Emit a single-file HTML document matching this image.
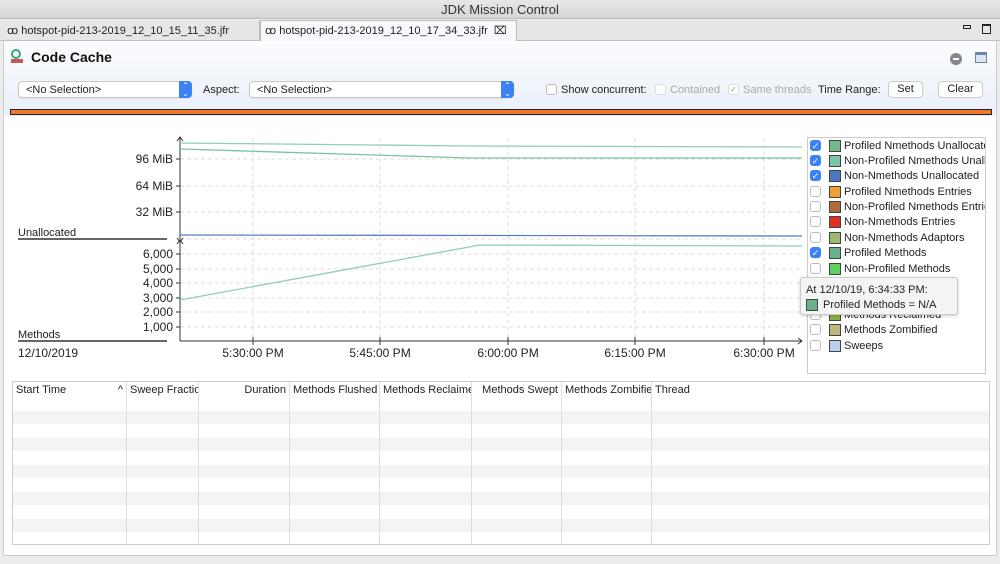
<!DOCTYPE html>
<html><head><style>
*{box-sizing:border-box;margin:0;padding:0}
body{width:1000px;height:564px;overflow:hidden;background:#ececec;font-family:"Liberation Sans",sans-serif;font-size:11px;color:#222;position:relative}
.abs{position:absolute}
.sel{position:absolute;height:17px;background:#fff;border:1px solid #c8c8c8;border-radius:4px;font-size:11px;padding:2px 7px;box-shadow:0 1px 1px rgba(0,0,0,.08)}
.sel .ar{position:absolute;right:-1px;top:-1px;width:13px;height:17px;background:#3b82f6;border-radius:0 4px 4px 0;color:#fff;font-size:8px;text-align:center;line-height:8px;padding-top:1px}
.cb{position:absolute;width:11px;height:11px;border:1px solid #bbb;border-radius:3px;background:#fff}
.cb.on{background:#3b82f6;border-color:#3b82f6;color:#fff;font-size:9px;line-height:10px;text-align:center}
.btn{position:absolute;height:17px;background:#fff;border:1px solid #ccc;border-radius:4px;text-align:center;font-size:11px;line-height:15px}
.leg{position:absolute;left:810px;width:175px;overflow:hidden;height:14px;font-size:11px;white-space:nowrap}
.sw{position:absolute;left:19px;top:0;width:12px;height:12px;border:1px solid #444}
.th{position:absolute;top:0;height:16px;line-height:16px;font-size:11px;border-right:1px solid #ddd;padding:0 3px;white-space:nowrap;overflow:hidden}
</style></head><body>
<div class="abs" style="left:0;top:0;width:1000px;height:19px;background:linear-gradient(#e8e8e8,#d6d6d6);text-align:center;font-size:13px;line-height:19px;color:#333;border-bottom:1px solid #bbb">JDK Mission Control</div>
<div class="abs" style="left:0;top:20px;width:1000px;height:21px;background:#e6e6e6;border-bottom:1px solid #c0c0c0"></div>
<div class="abs" style="left:3px;top:21px;width:257px;height:20px;border-right:1px solid #bbb;font-size:11px;line-height:20px;padding-left:4px;color:#222">ꝏ hotspot-pid-213-2019_12_10_15_11_35.jfr</div>
<div class="abs" style="left:260px;top:20px;width:257px;height:22px;background:#f6f8fc;border:1px solid #bbb;border-bottom:none;font-size:11px;line-height:20px;padding-left:4px">ꝏ hotspot-pid-213-2019_12_10_17_34_33.jfr &nbsp;⌧</div>
<div class="abs" style="left:963px;top:25px;width:8px;height:4px;border:1px solid #222"></div>
<div class="abs" style="left:982px;top:24px;width:9px;height:10px;border:1px solid #222;border-top-width:2px"></div>
<div class="abs" style="left:3px;top:41px;width:994px;height:74px;background:linear-gradient(#fbfcfe,#e9eff9);border-left:1px solid #ccc;border-right:1px solid #ccc"></div>
<div class="abs" style="left:11px;top:49px;width:10px;height:10px;border:2px solid #3a7;border-radius:50%"></div>
<div class="abs" style="left:11px;top:59px;width:12px;height:4px;background:#c55"></div>
<div class="abs" style="left:31px;top:49px;font-size:14px;font-weight:bold;color:#111">Code Cache</div>
<div class="abs" style="left:950px;top:53px;width:12px;height:12px;border-radius:50%;background:#888"><div style="margin:5px 3px;width:6px;height:2px;background:#fff"></div></div>
<div class="abs" style="left:975px;top:52px;width:12px;height:11px;border:1px solid #6a86aa;background:#dbe5f2;border-top-width:3px"></div>
<div class="sel" style="left:18px;top:81px;width:174px">&lt;No Selection&gt;<div class="ar">⌃<br>⌄</div></div>
<div class="abs" style="left:203px;top:84px">Aspect:</div>
<div class="sel" style="left:249px;top:81px;width:265px">&lt;No Selection&gt;<div class="ar">⌃<br>⌄</div></div>
<div class="cb" style="left:546px;top:84px"></div><div class="abs" style="left:561px;top:84px">Show concurrent:</div>
<div class="cb" style="left:655px;top:84px;border-color:#ddd"></div><div class="abs" style="left:670px;top:84px;color:#aaa">Contained</div>
<div class="cb" style="left:728px;top:84px;border-color:#ddd;font-size:8px;color:#999;line-height:10px;text-align:center">✓</div><div class="abs" style="left:743px;top:84px;color:#aaa">Same threads</div>
<div class="abs" style="left:818px;top:84px">Time Range:</div>
<div class="btn" style="left:888px;top:81px;width:35px">Set</div>
<div class="btn" style="left:938px;top:81px;width:45px">Clear</div>
<div class="abs" style="left:10px;top:109px;width:982px;height:6px;background:#f07830;border:1px solid #222"></div>
<div class="abs" style="left:3px;top:116px;width:994px;height:440px;background:#fff;border:1px solid #ccc;border-top:none"></div>
<svg class="abs" style="left:0;top:116px" width="1000" height="262" font-family="Liberation Sans" font-size="12" fill="#222">
<g stroke="#ddd" stroke-dasharray="4,3">
<line x1="253" y1="22" x2="253" y2="225"/><line x1="380" y1="22" x2="380" y2="225"/><line x1="508" y1="22" x2="508" y2="225"/><line x1="635" y1="22" x2="635" y2="225"/><line x1="764" y1="22" x2="764" y2="225"/>
<line x1="180" y1="43" x2="802" y2="43"/><line x1="180" y1="70" x2="802" y2="70"/><line x1="180" y1="96" x2="802" y2="96"/><line x1="180" y1="123" x2="802" y2="123"/>
<line x1="180" y1="138" x2="802" y2="138"/><line x1="180" y1="153" x2="802" y2="153"/><line x1="180" y1="167" x2="802" y2="167"/><line x1="180" y1="182" x2="802" y2="182"/><line x1="180" y1="196" x2="802" y2="196"/><line x1="180" y1="211" x2="802" y2="211"/>
</g>
<g stroke="#333" fill="none">
<line x1="180" y1="22" x2="180" y2="225"/><path d="M177,25 L180,21 L183,25"/><path d="M177,128 L180,124 L183,128"/><path d="M177,122 L180,126 L183,122"/>
<line x1="180" y1="225" x2="802" y2="225"/><path d="M798,222 L802,225 L798,228"/>
<line x1="176" y1="43" x2="180" y2="43"/><line x1="176" y1="70" x2="180" y2="70"/><line x1="176" y1="96" x2="180" y2="96"/>
<line x1="176" y1="138" x2="180" y2="138"/><line x1="176" y1="153" x2="180" y2="153"/><line x1="176" y1="167" x2="180" y2="167"/><line x1="176" y1="182" x2="180" y2="182"/><line x1="176" y1="196" x2="180" y2="196"/><line x1="176" y1="211" x2="180" y2="211"/>
<line x1="253" y1="221" x2="253" y2="229"/><line x1="380" y1="221" x2="380" y2="229"/><line x1="508" y1="221" x2="508" y2="229"/><line x1="635" y1="221" x2="635" y2="229"/><line x1="764" y1="221" x2="764" y2="229"/>
</g>
<line x1="18" y1="123" x2="167" y2="123" stroke="#333" stroke-width="1.5"/>
<line x1="18" y1="225" x2="167" y2="225" stroke="#333" stroke-width="1.5"/>
<g fill="none" stroke-width="1.3">
<path d="M180,27 L470,30 L802,31" stroke="#8fcfae"/>
<path d="M180,33 L470,42 L802,42" stroke="#7cc39f"/>
<path d="M180,119 L802,120" stroke="#5b7fc4"/>
<path d="M180,184 L480,129 L802,130" stroke="#8fcfae"/>
</g>
<g text-anchor="end"><text x="173" y="47">96 MiB</text><text x="173" y="74">64 MiB</text><text x="173" y="100">32 MiB</text>
<text x="173" y="142">6,000</text><text x="173" y="157">5,000</text><text x="173" y="171">4,000</text><text x="173" y="186">3,000</text><text x="173" y="200">2,000</text><text x="173" y="215">1,000</text></g>
<text x="18" y="120" font-size="11">Unallocated</text><text x="18" y="222" font-size="11">Methods</text><text x="18" y="241">12/10/2019</text>
<g text-anchor="middle"><text x="253" y="241">5:30:00 PM</text><text x="380" y="241">5:45:00 PM</text><text x="508" y="241">6:00:00 PM</text><text x="635" y="241">6:15:00 PM</text><text x="764" y="241">6:30:00 PM</text></g>
</svg>
<div class="abs" style="left:807px;top:137px;width:179px;height:237px;border:1px solid #ccc;background:#fff;overflow:hidden"></div>
<div class="leg" style="top:140px"><div class="cb on">✓</div><div class="sw" style="background:#73b891"></div><span style="margin-left:34px">Profiled Nmethods Unallocated</span></div>
<div class="leg" style="top:155px"><div class="cb on">✓</div><div class="sw" style="background:#7cc3a8"></div><span style="margin-left:34px">Non-Profiled Nmethods Unallocated</span></div>
<div class="leg" style="top:170px"><div class="cb on">✓</div><div class="sw" style="background:#4a78c0"></div><span style="margin-left:34px">Non-Nmethods Unallocated</span></div>
<div class="leg" style="top:186px"><div class="cb"></div><div class="sw" style="background:#f0a030"></div><span style="margin-left:34px">Profiled Nmethods Entries</span></div>
<div class="leg" style="top:201px"><div class="cb"></div><div class="sw" style="background:#b06a3c"></div><span style="margin-left:34px">Non-Profiled Nmethods Entries</span></div>
<div class="leg" style="top:216px"><div class="cb"></div><div class="sw" style="background:#e03020"></div><span style="margin-left:34px">Non-Nmethods Entries</span></div>
<div class="leg" style="top:232px"><div class="cb"></div><div class="sw" style="background:#9cb870"></div><span style="margin-left:34px">Non-Nmethods Adaptors</span></div>
<div class="leg" style="top:247px"><div class="cb on">✓</div><div class="sw" style="background:#6ab08c"></div><span style="margin-left:34px">Profiled Methods</span></div>
<div class="leg" style="top:263px"><div class="cb"></div><div class="sw" style="background:#5cd060"></div><span style="margin-left:34px">Non-Profiled Methods</span></div>
<div class="leg" style="top:309px"><div class="cb"></div><div class="sw" style="background:#8ab040"></div><span style="margin-left:34px">Methods Reclaimed</span></div>
<div class="leg" style="top:324px"><div class="cb"></div><div class="sw" style="background:#c0b878"></div><span style="margin-left:34px">Methods Zombified</span></div>
<div class="leg" style="top:340px"><div class="cb"></div><div class="sw" style="background:#b8d0ee"></div><span style="margin-left:34px">Sweeps</span></div>
<div class="abs" style="left:800px;top:277px;width:158px;height:38px;background:#f4f4f4;border:1px solid #ccc;border-radius:3px;box-shadow:0 1px 3px rgba(0,0,0,.2)">
<div class="abs" style="left:5px;top:6px">At 12/10/19, 6:34:33 PM:</div>
<div class="abs" style="left:5px;top:21px;width:12px;height:12px;background:#6ab08c;border:1px solid #444"></div>
<div class="abs" style="left:22px;top:21px">Profiled Methods = N/A</div></div>
<div class="abs" style="left:12px;top:381px;width:978px;height:164px;border:1px solid #ccc;background:#fff;overflow:hidden">
<div class="abs" style="left:0;top:29px;width:978px;height:13px;background:#f4f4f4"></div>
<div class="abs" style="left:0;top:56px;width:978px;height:13px;background:#f4f4f4"></div>
<div class="abs" style="left:0;top:83px;width:978px;height:13px;background:#f4f4f4"></div>
<div class="abs" style="left:0;top:110px;width:978px;height:13px;background:#f4f4f4"></div>
<div class="abs" style="left:0;top:137px;width:978px;height:13px;background:#f4f4f4"></div>
<div class="abs" style="left:113px;top:0;width:1px;height:164px;background:#ddd"></div>
<div class="abs" style="left:185px;top:0;width:1px;height:164px;background:#ddd"></div>
<div class="abs" style="left:276px;top:0;width:1px;height:164px;background:#ddd"></div>
<div class="abs" style="left:366px;top:0;width:1px;height:164px;background:#ddd"></div>
<div class="abs" style="left:458px;top:0;width:1px;height:164px;background:#ddd"></div>
<div class="abs" style="left:548px;top:0;width:1px;height:164px;background:#ddd"></div>
<div class="abs" style="left:638px;top:0;width:1px;height:164px;background:#ddd"></div>
<div class="th" style="left:0;width:114px">Start Time <span style="float:right">^</span></div>
<div class="th" style="left:114px;width:72px">Sweep Fraction</div>
<div class="th" style="left:186px;width:91px;text-align:right">Duration</div>
<div class="th" style="left:277px;width:90px">Methods Flushed</div>
<div class="th" style="left:367px;width:92px">Methods Reclaimed</div>
<div class="th" style="left:459px;width:90px;text-align:right">Methods Swept</div>
<div class="th" style="left:549px;width:90px">Methods Zombified</div>
<div class="th" style="left:639px;width:80px;border:none">Thread</div>
</div>
</body></html>
